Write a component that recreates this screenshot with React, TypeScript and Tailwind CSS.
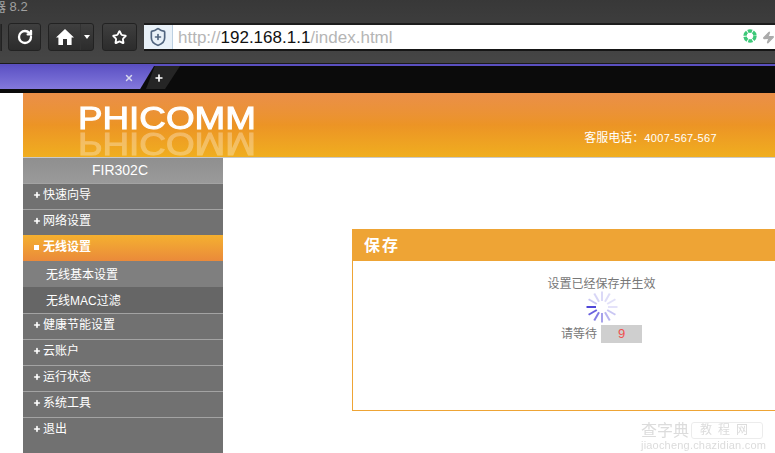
import { RotateCw, Star, Plus, X, ShieldPlus, Zap } from "lucide-react";

const cjk = "font-['Liberation_Sans','Noto_Sans_CJK_SC',sans-serif]";

const topMenu = ["快速向导", "网络设置"];
const bottomMenu = ["健康节能设置", "云账户", "运行状态", "系统工具", "退出"];

// spoke opacity, clockwise starting from 9 o'clock
const spokes = [1, 0.3, 0.22, 0.2, 0.18, 0.16, 0.15, 0.3, 0.4, 0.5, 0.7, 0.85];

const MenuRow = ({ label }: { label: string }) => (
  <div className="h-[26px] flex items-center border-t border-[#a3a3a3] bg-[#717171] pl-[10px] pb-[4px] text-xs text-white">
    <Plus size={8} strokeWidth={5} className="mr-[2px]" />
    <span>{label}</span>
  </div>
);

const ToolButton = ({ className, children }: { className: string; children: React.ReactNode }) => (
  <div className={`h-[28px] flex items-center justify-center rounded-[3px] border border-[#222] bg-gradient-to-b from-[#3f3f3f] to-[#2c2c2c] ${className}`}>
    {children}
  </div>
);

const Spinner = () => (
  <svg width="34" height="34" viewBox="-17 -17 34 34">
    {spokes.map((o, i) => (
      <line
        key={i}
        x1="-15.5"
        y1="0"
        x2="-6"
        y2="0"
        stroke="#4f46d8"
        strokeWidth="2"
        opacity={o}
        transform={`rotate(${i * 30})`}
      />
    ))}
  </svg>
);

const LoadIcon = () => (
  <svg width="14" height="14" viewBox="0 0 14 14" fill="none" className="-mt-[2px]">
    <circle cx="7" cy="7" r="5" stroke="#3cc878" strokeWidth="3.4" strokeDasharray="4.2 1" />
  </svg>
);

const HomeIcon = () => (
  <svg width="18" height="16" viewBox="0 0 18 16" fill="white">
    <path d="M9 0 L18 8.5 L15.6 8.5 L15.6 16 L11 16 L11 10 L7 10 L7 16 L2.4 16 L2.4 8.5 L0 8.5 Z" />
  </svg>
);

export default function App() {
  return (
    <div className={`w-[775px] h-[453px] overflow-hidden relative bg-white ${cjk}`}>
      {/* browser chrome */}
      <div className="h-[64px] bg-gradient-to-b from-[#383838] to-[#464646] border-b border-[#1c1c1c] overflow-hidden">
        <div className="h-[23px] -ml-[7px] text-[13px] leading-[13px] text-[#a0a0a0]">器 8.2</div>
        <div className="flex items-center h-[28px]">
          <div className="w-[2px] h-[27px] bg-[#2c2c2c] border-r border-[#222]" />
          <ToolButton className="ml-[6px] w-[33px]">
            <RotateCw size={16} strokeWidth={3.5} className="text-white" />
          </ToolButton>
          <ToolButton className="ml-[7px] w-[46px] justify-start">
            <div className="w-[32px] flex justify-center border-r border-[#333] h-full items-center">
              <HomeIcon />
            </div>
            <svg width="6" height="4" viewBox="0 0 6 4" fill="white" className="ml-[3px]">
              <path d="M0 0 H6 L3 4 Z" />
            </svg>
          </ToolButton>
          <ToolButton className="ml-[8px] w-[35px]">
            <Star size={15} strokeWidth={3} className="text-white" />
          </ToolButton>
          <div className="ml-[7px] flex-1 h-[28px] flex items-center bg-white border-t-2 border-b-2 border-[#161616] border-t-[#1d1d1d]">
            <div className="w-[29px] h-full flex items-center justify-center bg-[#e9f1f8] border-r border-[#bcd0e2]">
              <ShieldPlus size={20} strokeWidth={2} className="text-[#51657f]" />
            </div>
            <div className="ml-[5px] pt-[1px] text-[17px] font-['Liberation_Sans',sans-serif] text-[#b5b5b5]">
              http://<span className="text-[#111]">192.168.1.1</span>/index.html
            </div>
            <div className="ml-auto mr-[5px] flex items-center gap-[5px]">
              <LoadIcon />
              <Zap size={13} className="text-[#aaa] fill-[#aaa] -mr-[5px]" />
            </div>
          </div>
        </div>
      </div>

      {/* tab strip */}
      <div className="h-[29px] bg-[#0b0b0b] relative">
        <div className="h-[2px] bg-[#5b50c0]" />
        <div className="flex items-start">
          <div className="w-[154px] h-[23px] bg-gradient-to-b from-[#5d52c4] to-[#8378dc] [clip-path:polygon(0_0,100%_0,91%_100%,0_100%)] flex items-center justify-end pr-[20px]">
            <X size={10} strokeWidth={3.5} className="text-[#d8d8ee]" />
          </div>
          <div className="-ml-[8px] w-[34px] h-[23px] bg-[#252525] [clip-path:polygon(26%_0,100%_0,56%_100%,0_100%)] flex items-center justify-center pr-[8px]">
            <Plus size={10} strokeWidth={4} className="text-white" />
          </div>
        </div>
      </div>

      {/* router page */}
      <div className="pl-[23px]">
        <div className="h-[65px] bg-gradient-to-b from-[#ea8f48] via-[#ec9425] to-[#f0ae1f] border-b border-[#c9c9c9] flex relative">
          <div className="ml-[55px] mt-[13px] w-[180px] h-[51px] font-['Liberation_Sans',sans-serif] text-white">
            <div className="h-[25px] text-[32px] leading-[25px] [-webkit-text-stroke:1px_white] origin-left scale-x-[1.15] whitespace-nowrap">PHICOMM</div>
            <div className="h-[25px] text-[32px] leading-[25px] [-webkit-text-stroke:1px_white] origin-left scale-x-[1.15] -scale-y-100 opacity-30 whitespace-nowrap">PHICOMM</div>
          </div>
          <div className="ml-auto mr-[58px] mt-[37px] text-xs text-white">
            客服电话：<span className="text-[11px] tracking-[0.35px]">4007-567-567</span>
          </div>
        </div>

        <div className="flex">
          <div className="w-[200px] h-[295px] bg-[#717171] shrink-0">
            <div className="h-[25px] bg-gradient-to-b from-[#8f8f8f] to-[#9a9a9a] flex items-center justify-center pr-[6px] pb-[2px] text-sm text-white">FIR302C</div>
            {topMenu.map((m) => (
              <MenuRow key={m} label={m} />
            ))}
            <div className="h-[26px] flex items-center bg-gradient-to-b from-[#f4b02f] to-[#ea8a3a] pl-[11px] pb-[2px] text-xs font-bold text-white">
              <span className="w-[5px] h-[5px] bg-white mr-[4px]" />
              <span>无线设置</span>
            </div>
            <div className="h-[26px] flex items-center bg-[#7f7f7f] pl-[23px] pt-[2px] text-xs text-white">无线基本设置</div>
            <div className="h-[26px] flex items-center bg-[#666666] pl-[23px] pt-[2px] text-xs text-white">无线MAC过滤</div>
            {bottomMenu.map((m) => (
              <MenuRow key={m} label={m} />
            ))}
          </div>

          <div className="flex-1 min-w-0 pl-[129px] pt-[71px]">
            <div className="w-[600px] h-[182px] border border-[#eea435]">
              <div className="h-[31px] bg-[#eea435] pl-[11px] flex items-center text-base tracking-[2px] font-bold text-white">保存</div>
              <div className="w-[497px] flex flex-col items-center pt-[15px] text-xs text-[#777]">
                <div className="h-[17px] leading-[17px]">设置已经保存并生效</div>
                <div className="-mt-[3px] h-[34px]">
                  <Spinner />
                </div>
                <div className="flex items-center h-[18px] mt-[1px]">
                  <span>请等待</span>
                  <span className="ml-[4px] w-[41px] h-[18px] bg-[#cfcfcf] flex items-center justify-center text-[13px] text-[#f05050]">9</span>
                </div>
              </div>
            </div>
          </div>
        </div>
      </div>

      {/* watermark */}
      <div className="absolute right-[12px] bottom-[2px] w-[122px] text-[#dcdcdc] blur-[0.4px]">
        <div className="flex items-center h-[17px]">
          <span className="text-base leading-[17px] whitespace-nowrap">查字典</span>
          <span className="ml-[2px] flex-1 h-[17px] border border-[#ececec] rounded-[3px] text-xs tracking-[6px] text-center leading-[15px]">教程网</span>
        </div>
        <div className="text-[11px] leading-[12px] tracking-[0.2px] whitespace-nowrap">jiaocheng.chazidian.com</div>
      </div>
    </div>
  );
}
